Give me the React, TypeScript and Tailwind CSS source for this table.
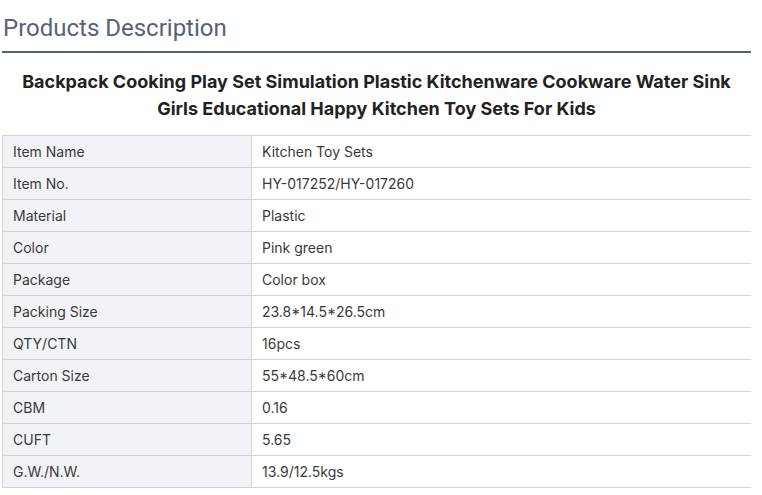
import * as React from "react";

const rows: [string, string][] = [
  ["Item Name", "Kitchen Toy Sets"],
  ["Item No.", "HY-017252/HY-017260"],
  ["Material", "Plastic"],
  ["Color", "Pink green"],
  ["Package", "Color box"],
  ["Packing Size", "23.8*14.5*26.5cm"],
  ["QTY/CTN", "16pcs"],
  ["Carton Size", "55*48.5*60cm"],
  ["CBM", "0.16"],
  ["CUFT", "5.65"],
  ["G.W./N.W.", "13.9/12.5kgs"],
];

export default function App() {
  return (
    <div className="w-[762px] h-[495px] bg-white overflow-hidden">
      <div className="ml-[2px] w-[749px]">
        {/* 제목 영역 */}
        <div className="border-b-2 border-[#55627a] pt-[13px] pb-[8px]">
          <h2 className="text-[24px] leading-[30px] text-[#55627a] pl-px" style={{ fontFamily: "Roboto, sans-serif" }}>
            Products Description
          </h2>
        </div>
        <h1
          className="mt-[15px] text-center text-[18px] leading-[27px] font-bold text-[#222]"
          style={{ fontFamily: "Inter, sans-serif" }}
        >
          Backpack Cooking Play Set Simulation Plastic Kitchenware Cookware Water Sink
          <br />
          Girls Educational Happy Kitchen Toy Sets For Kids
        </h1>
        {/* 사양 테이블 */}
        <table className="mt-[13px] w-full border-collapse text-[14px] text-[#3a3a3a]" style={{ fontFamily: "Inter, sans-serif" }}>
          <tbody>
            {rows.map(([k, v]) => (
              <tr key={k} className="h-[32px]">
                <td className="w-[249px] border border-[#d4d4d4] bg-[#f2f3f7] pl-[10px] py-0">{k}</td>
                <td className="border-y border-[#d4d4d4] pl-[10px] py-0">{v}</td>
              </tr>
            ))}
          </tbody>
        </table>
      </div>
    </div>
  );
}
